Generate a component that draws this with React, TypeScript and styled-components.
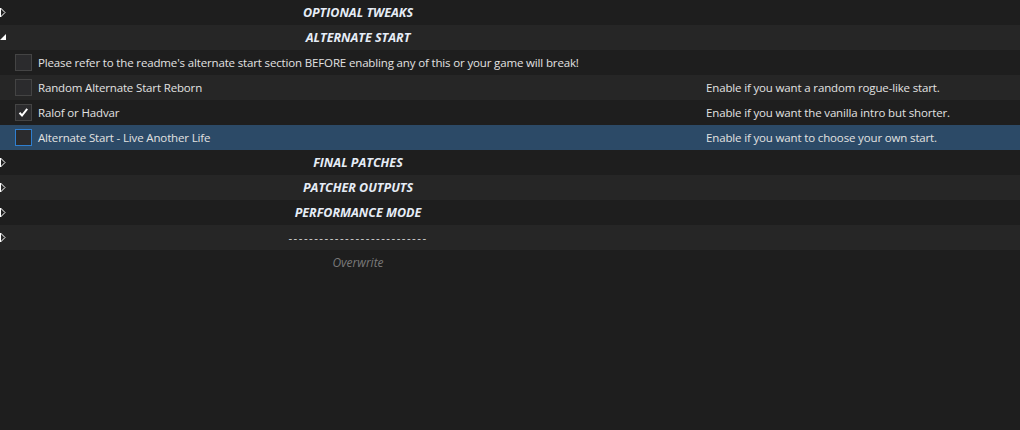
import React from "react";
import styled, { createGlobalStyle } from "styled-components";

const Global = createGlobalStyle`
  html, body {
    margin: 0;
    padding: 0;
    background: #1e1e1e;
    height: 100%;
  }
  body {
    font-family: "Open Sans", "Noto Sans", Arial, sans-serif;
    font-size: 11.5px;
    letter-spacing: -0.15px;
    color: #e2e2e2;
    overflow: hidden;
  }
`;

const Page = styled.div`
  width: 1020px;
  height: 430px;
  background: #1e1e1e;
  display: flex;
  flex-direction: column;
`;

type Tone = "dark" | "light" | "selected";

const bg = (t: Tone) =>
  t === "selected" ? "#2c4a67" : t === "light" ? "#262626" : "#1e1e1e";

const Row = styled.div<{ $tone: Tone; $split?: number }>`
  height: 25px;
  flex: 0 0 25px;
  display: grid;
  grid-template-columns: ${(p) => p.$split ?? 716}px 1fr;
  align-items: center;
  background: ${(p) => bg(p.$tone)};
  position: relative;
`;

const HeaderTitle = styled.div`
  text-align: center;
  font-weight: 700;
  font-style: italic;
  font-size: 12.5px;
  letter-spacing: 0;
  color: #e6edf7;
`;

const Placeholder = styled.div`
  text-align: center;
  font-style: italic;
  font-size: 12px;
  letter-spacing: 0;
  color: #7a7a7a;
`;

const Dashes = styled.div`
  text-align: center;
  color: #dcdcdc;
  letter-spacing: 1.45px;
`;

const Arrow = styled.svg`
  position: absolute;
  left: 0;
  top: 7px;
`;

const ModCell = styled.div`
  display: flex;
  align-items: center;
  gap: 6px;
  padding-left: 15px;
  white-space: nowrap;
`;

const Box = styled.span<{ $focus?: boolean }>`
  width: 15px;
  height: 15px;
  flex: 0 0 15px;
  border: 1px solid ${(p) => (p.$focus ? "#2f7fd0" : "#444444")};
  background: #2b2b2d;
  display: flex;
  align-items: center;
  justify-content: center;
`;

const Desc = styled.div`
  padding-left: 6px;
  white-space: nowrap;
`;

const Collapsed = () => (
  <Arrow width="8" height="11" viewBox="0 0 8 11">
    <path d="M0.5 1 L5 5.5 L0.5 10 Z" fill="none" stroke="#ffffff" strokeWidth="1" />
  </Arrow>
);

const Expanded = () => (
  <Arrow width="8" height="11" viewBox="0 0 8 11">
    <path d="M6 2 L6 8 L0 8 Z" fill="#ffffff" />
  </Arrow>
);

const Check = () => (
  <svg width="11" height="11" viewBox="0 0 11 11">
    <path d="M1.5 5.8 L4 8.5 L9.2 1.8" fill="none" stroke="#ffffff" strokeWidth="2" />
  </svg>
);

const Header: React.FC<{ title: string; tone: Tone; open?: boolean }> = ({ title, tone, open }) => (
  <Row $tone={tone}>
    {open ? <Expanded /> : <Collapsed />}
    <HeaderTitle>{title}</HeaderTitle>
    <div />
  </Row>
);

const Mod: React.FC<{ name: string; desc?: string; tone: Tone; checked?: boolean }> = ({
  name,
  desc,
  tone,
  checked,
}) => (
  <Row $tone={tone} $split={700}>
    <ModCell>
      <Box $focus={tone === "selected"}>{checked && <Check />}</Box>
      <span>{name}</span>
    </ModCell>
    <Desc>{desc}</Desc>
  </Row>
);

export default function App() {
  return (
    <Page>
      <Global />
      <Header title="OPTIONAL TWEAKS" tone="dark" />
      <Header title="ALTERNATE START" tone="light" open />
      <Mod
        tone="dark"
        name="Please refer to the readme's alternate start section BEFORE enabling any of this or your game will break!"
      />
      <Mod tone="light" name="Random Alternate Start Reborn" desc="Enable if you want a random rogue-like start." />
      <Mod tone="dark" checked name="Ralof or Hadvar" desc="Enable if you want the vanilla intro but shorter." />
      <Mod
        tone="selected"
        name="Alternate Start - Live Another Life"
        desc="Enable if you want to choose your own start."
      />
      <Header title="FINAL PATCHES" tone="dark" />
      <Header title="PATCHER OUTPUTS" tone="light" />
      <Header title="PERFORMANCE MODE" tone="dark" />
      <Row $tone="light">
        <Collapsed />
        <Dashes>---------------------------</Dashes>
        <div />
      </Row>
      <Row $tone="dark">
        <Placeholder>Overwrite</Placeholder>
        <div />
      </Row>
    </Page>
  );
}
